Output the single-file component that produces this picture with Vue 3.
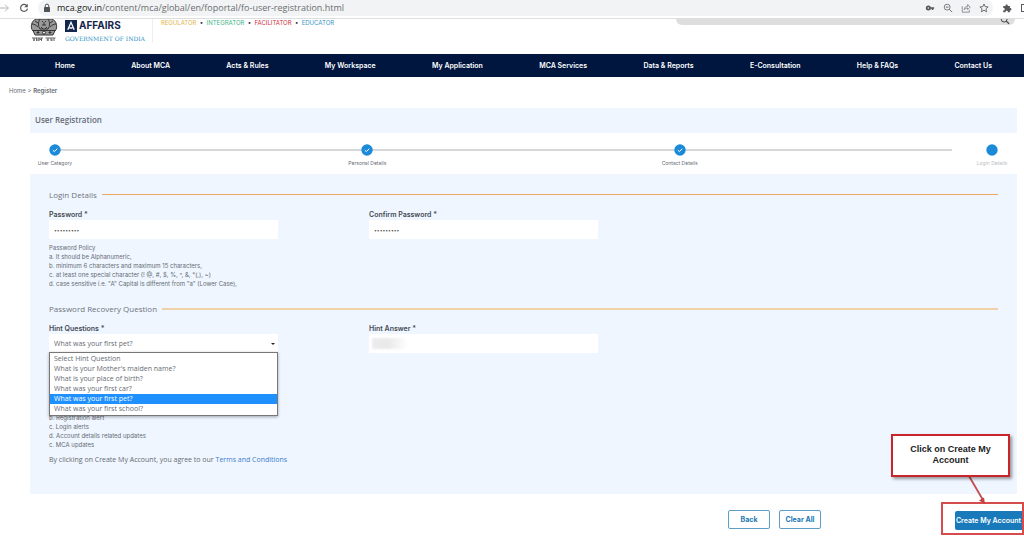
<script setup>
import { ref } from 'vue'

const menu = ['Home', 'About MCA', 'Acts & Rules', 'My Workspace', 'My Application', 'MCA Services', 'Data & Reports', 'E-Consultation', 'Help & FAQs', 'Contact Us']
const steps = [
  { label: 'User Category', done: true },
  { label: 'Personal Details', done: true },
  { label: 'Contact Details', done: true },
  { label: 'Login Details', done: false },
]
const policy = [
  'a. It should be Alphanumeric,',
  'b. minimum 6 characters and maximum 15 characters,',
  'c. at least one special character (! @, #, $, %, ^, &, *(,), ~)',
  'd. case sensitive i.e. "A" Capital is different from "a" (Lower Case),',
]
const alerts = ['b. Registration alert', 'c. Login alerts', 'd. Account details related updates', 'c. MCA updates']
const questions = [
  'Select Hint Question',
  "What is your Mother's maiden name?",
  'What is your place of birth?',
  'What was your first car?',
  'What was your first pet?',
  'What was your first school?',
]
const url = ref('/content/mca/global/en/foportal/fo-user-registration.html')
const password = ref('password1')
const confirm = ref('password1')
const hint = ref('What was your first pet?')
const answer = ref('')
</script>

<template>
  <div class="page">
    <div class="browser">
      <svg class="ic" viewBox="0 0 12 12"><path d="M0 6h10M6 2l4 4-4 4" fill="none" stroke="#b4b6b9" stroke-width="1.2" /></svg>
      <svg class="ic reload" viewBox="0 0 12 12"><path d="M9.6 3.6A4.2 4.2 0 1 0 10.200 6.800" fill="none" stroke="#55585c" stroke-width="1.400" /><path d="M10.500 1v4.200H6.300z" fill="#55585c" /></svg>
      <div class="address">
        <svg class="lock" viewBox="0 0 8 10"><rect x="1" y="4" width="6" height="5" rx=".6" fill="#4f5357" /><path d="M2.300 4V2.800a1.700 1.700 0 0 1 3.400 0V4" fill="none" stroke="#4f5357" stroke-width="1" /></svg>
        <span class="url"><b>mca.gov.in</b>{{ url }}</span>
        <svg class="ic" viewBox="0 0 12 12"><circle cx="4" cy="6" r="2" fill="none" stroke="#55585c" stroke-width="2" /><path d="M6 6h5M9 6v2.400" fill="none" stroke="#55585c" stroke-width="1.900" /></svg>
        <svg class="ic" viewBox="0 0 12 12"><circle cx="5" cy="5" r="3.500" fill="none" stroke="#6f7377" stroke-width="1.100" /><path d="M7.500 7.500l3.500 3.500M3.400 5h3.200" fill="none" stroke="#6f7377" stroke-width="1.200" /></svg>
        <svg class="ic" viewBox="0 0 12 12"><path d="M1.500 4v7h8.500V8.500M4 8c.2-3 1.800-4 4-4V1.800l3 3.200-3 3V6C6.300 6 5 6.600 4 8z" fill="none" stroke="#6f7377" stroke-width=".9" /></svg>
        <svg class="ic" viewBox="0 0 12 12"><path d="M6 1.200l1.400 3.200 3.500.3-2.600 2.300.8 3.500L6 8.700l-3.100 1.800.8-3.500L1.100 4.700l3.500-.3z" fill="none" stroke="#55585c" stroke-width="1" /></svg>
      </div>
      <svg class="ic" viewBox="0 0 12 12"><path d="M1.500 3.500h2.700a1.400 1.400 0 1 1 2.700 0h2.600v2.700a1.400 1.400 0 1 1 0 2.700v2.300H7a1.400 1.400 0 1 0-2.700 0H1.500V8.700a1.400 1.400 0 1 0 0-2.700z" fill="#55585c" /></svg>
      <span class="panel-icon"></span>
    </div>

    <header class="site">
      <svg class="emblem" viewBox="0 0 28 24">
        <g fill="#999" stroke="#333" stroke-width="1">
          <path d="M6 0C1 2 0 9 3 12l5 3h12l5-3c3-3 2-10-3-12z" />
          <path d="M10 0c-2 3-2 7 0 10h8c2-3 2-7 0-10M2 5c2 0 4 1 6 3M26 5c-2 0-4 1-6 3M5 2l3 2M23 2l-3 2M12 2l1 1M15 3l1-1M12 6h4M14 3v3M11 8l2 2M17 8l-2 2" fill="none" />
          <path d="M3 11.500h22l-2 4.500H5z" />
          <circle cx="14" cy="13.600" r="1.500" fill="#eee" />
          <path d="M7 13h2v1H7zM19 13h2v1h-2z" fill="#333" />
        </g>
        <path d="M2 19h11M15.500 19h10M4 19v3M6.500 19v3M9 19v3M11.500 19v3M18 19v3M21 19v3M24 19v3M3 21h2M7 21h2M9.500 20.500h2M16.500 21h2M21 21h2" fill="none" stroke="#555" stroke-width=".9" />
      </svg>
      <div class="brand">
        <div class="brand-row">
          <svg class="badge" viewBox="0 0 12 12"><path d="M0 0h12v12H0z" fill="#14264d" /><path d="M2.800 9.700L6 2.300l3.200 7.400M4.500 8h3" fill="none" stroke="#fff" stroke-width="1.300" /></svg>
          <span>AFFAIRS</span>
        </div>
        <div class="gov">GOVERNMENT OF INDIA</div>
      </div>
      <div class="motto"><span class="y">REGULATOR</span> &nbsp;•&nbsp; <span class="g">INTEGRATOR</span> &nbsp;•&nbsp; <span class="r">FACILITATOR</span> &nbsp;•&nbsp; <span class="b">EDUCATOR</span></div>
      <div class="search"><svg viewBox="0 0 12 12"><circle cx="5" cy="5" r="3.500" fill="none" stroke="#444" stroke-width="1.200" /><path d="M7.500 7.500l3.500 3" stroke="#444" stroke-width="1.300" /></svg></div>
    </header>

    <nav class="menu"><a v-for="m in menu" :key="m" href="#">{{ m }}</a></nav>
    <div class="crumbs"><a href="#">Home</a> &gt; <b>Register</b></div>

    <main>
      <h1>User Registration</h1>
      <ol class="steps">
        <li v-for="s in steps" :key="s.label" :class="{ current: !s.done }">
          <svg viewBox="0 0 12 12"><circle cx="6" cy="6" r="5.700" fill="#1b8ad8" /><path v-if="s.done" d="M3.800 6.200l1.500 1.400 3-2.900" fill="none" stroke="#fff" stroke-width="1" /></svg>
          <span>{{ s.label }}</span>
        </li>
      </ol>

      <form class="panel" @submit.prevent>
        <h2>Login Details</h2>
        <div class="fields">
          <div class="field">
            <label for="pw">Password *</label>
            <input id="pw" v-model="password" type="password">
          </div>
          <div class="field">
            <label for="cpw">Confirm Password *</label>
            <input id="cpw" v-model="confirm" type="password">
          </div>
        </div>
        <div class="policy">
          <p>Password Policy</p>
          <p v-for="p in policy" :key="p">{{ p }}</p>
        </div>

        <h2 class="thick">Password Recovery Question</h2>
        <div class="fields">
          <div class="field">
            <label for="hq">Hint Questions *</label>
            <select id="hq" v-model="hint"><option v-for="q in questions" :key="q">{{ q }}</option></select>
            <svg class="caret" viewBox="0 0 4 2"><path d="M0 0h4L2 2z" fill="#222" /></svg>
            <ul class="options" role="listbox" aria-label="Hint Questions">
              <li v-for="q in questions" :key="q" role="option" :aria-selected="q === hint">{{ q }}</li>
            </ul>
          </div>
          <div class="field answer">
            <label for="ha">Hint Answer *</label>
            <input id="ha" v-model="answer" type="text">
          </div>
        </div>
        <div class="alerts"><p v-for="a in alerts" :key="a">{{ a }}</p></div>
        <p class="terms">By clicking on Create My Account, you agree to our <a href="#">Terms and Conditions</a></p>
      </form>
    </main>

    <div class="actions">
      <button type="button">Back</button>
      <button type="button">Clear All</button>
      <div class="highlight">
        <button type="button" class="primary">Create My Account</button>
        <svg class="arrow" viewBox="0 0 24 32"><path d="M4 1l14 24" stroke="#c24f4f" stroke-width="1.800" /><path d="M20 29l-6-3.500 5-3z" fill="#c24141" /></svg>
        <div class="callout">Click on Create My Account</div>
      </div>
    </div>
  </div>
</template>

<style>
body { margin: 0; background: #fff; }
</style>

<style scoped>
* { box-sizing: border-box; }
.page { font: 6px/9px Inter, "Open Sans", sans-serif; color: #666b73; overflow: hidden; min-height: 100vh; }
h1, h2, p, ol, ul { margin: 0; padding: 0; list-style: none; }
a { color: inherit; text-decoration: none; }
input, select, button { font: inherit; color: inherit; border: 0; }

.browser { height: 19px; display: flex; align-items: center; border-bottom: 1px solid #dcdddf; padding-bottom: 2px; overflow: hidden; }
.ic { width: 10px; height: 10px; flex: none; }
.reload { margin-left: 9px; }
.address { flex: 1; height: 16px; margin: 0 9px; padding: 0 4px; background: #f1f3f4; border-radius: 8px; display: flex; align-items: center; gap: 8px; }
.lock { width: 8px; height: 10px; margin-left: 1px; }
.url { flex: 1; font: 9px/14px "Open Sans", sans-serif; color: #6a6d70; margin-left: -2px; }
.url b { font-weight: 400; color: #222; }
.panel-icon { width: 3px; height: 8px; border: 1px solid #55585c; border-right: 0; margin-left: 9px; }

.site { height: 35px; display: flex; align-items: flex-start; padding: 0 9px 0 30px; overflow: hidden; }
.emblem { width: 28px; height: 24px; flex: none; }
.brand { margin-left: 7px; padding-right: 7px; border-right: 1px solid #eee; }
.brand-row { display: flex; align-items: center; gap: 2px; height: 13px; font-size: 10px; font-weight: 700; color: #14264d; }
.badge { width: 12px; height: 12px; }
.gov { margin-top: 2px; font: 6px/9px "DejaVu Serif", serif; color: #2b8fc4; white-space: nowrap; }
.motto { margin-left: 8px; line-height: 8px; color: #333; }
.y { color: #e1b54a; } .g { color: #3fb488; } .r { color: #d0323d; } .b { color: #3b96c5; }
.search { margin-left: auto; width: 339px; height: 6px; padding-right: 5px; background: #dedede; border-radius: 0 0 9px 9px; overflow: hidden; display: flex; justify-content: flex-end; align-items: flex-end; }
.search svg { width: 10px; height: 10px; flex: none; }

.menu { height: 23px; padding: 0 32px 0 55px; background: #00163e; color: #fff; display: flex; align-items: center; justify-content: space-between; font-size: 7px; font-weight: 600; }
.crumbs { padding: 9px 9px; height: 31px; }
.crumbs b { font-weight: 600; }

main { margin: 0 7px 0 30px; }
h1 { height: 25px; padding-left: 5px; background: #eff6ff; font: 600 8px/24px "Open Sans", sans-serif; }
.steps { height: 41px; display: flex; justify-content: space-between; position: relative; padding-top: 11px; }
.steps::before { content: ""; position: absolute; left: 25px; right: 65px; top: 16px; height: 2px; background: #d5d7d9; }
.steps li { position: relative; width: 50px; display: flex; flex-direction: column; align-items: center; gap: 3px; font-size: 5px; white-space: nowrap; }
.steps svg { width: 12px; height: 12px; }
.current { color: #b9bdc2; }

.panel { background: #eff6ff; padding: 14px 19px 0; height: 320px; }
h2 { display: flex; align-items: center; gap: 5px; font: 400 8px/13px "Open Sans", sans-serif; color: #6f747c; }
h2::after { content: ""; flex: 1; height: 1px; background: #eba867; }
.thick::after { height: 2px; background: #f0d1a8; }
.fields { display: grid; grid-template-columns: 229fr 229fr 309fr; column-gap: 91px; margin-top: 9px; }
.field { position: relative; display: flex; flex-direction: column; }
label { font-size: 7px; font-weight: 600; line-height: 10px; color: #444a54; }
.field input, .field select { width: 100%; height: 19px; padding: 0 5px; background: #fff; border-radius: 0; appearance: none; }
.field input[type="password"] { font-size: 5px; color: #555; }
.field select, .options, .terms { font: 7px/10px "Open Sans", sans-serif; }
.caret { position: absolute; right: 3px; top: 19px; width: 4px; height: 2px; }
.answer::after { content: ""; position: absolute; left: 3px; top: 14px; width: 36px; height: 11px; background: linear-gradient(90deg, #ececec, #e9e9e9 45%, #fff); filter: blur(1px); }
.policy { margin-top: 4px; padding-bottom: 14px; }
.options { position: absolute; z-index: 2; top: 28px; left: 0; right: 0; padding: 1px 0; background: #fff; border: 1px solid #777; box-shadow: 0 1px 3px #0005; }
.options li { height: 10px; padding-left: 4px; }
.options li[aria-selected="true"] { background: #1e90ff; color: #fff; }
.alerts { margin-top: 60px; }
.terms { margin-top: 6px; }
.terms a { color: #3a7dce; }

.actions { display: flex; justify-content: flex-end; align-items: center; gap: 9px; padding: 8px 0; }
.actions button { height: 19px; width: 42px; margin-top: 2px; padding: 0; background: #fff; border: 1px solid #5f9dc9; border-radius: 2px; color: #2077b4; font-size: 7px; font-weight: 700; white-space: nowrap; }
.highlight { position: relative; width: 83px; height: 33px; padding: 5px 0 0 12px; margin-left: 111px; border: 2px solid #d64b4b; }
.actions .primary { width: 67px; background: #197abb; border: 0; border-radius: 2px 0 0 2px; color: #fff; font-weight: 600; }
.callout { position: absolute; right: 12px; bottom: 56px; width: 119px; height: 43px; padding: 8px 14px; background: #fff; border: 2px solid #c9252b; box-shadow: 2px 2px 3px #0006; color: #222; text-align: center; font: 700 9px/11px "Liberation Sans", sans-serif; }
.arrow { position: absolute; left: 22px; bottom: 26px; width: 24px; height: 32px; }
</style>
